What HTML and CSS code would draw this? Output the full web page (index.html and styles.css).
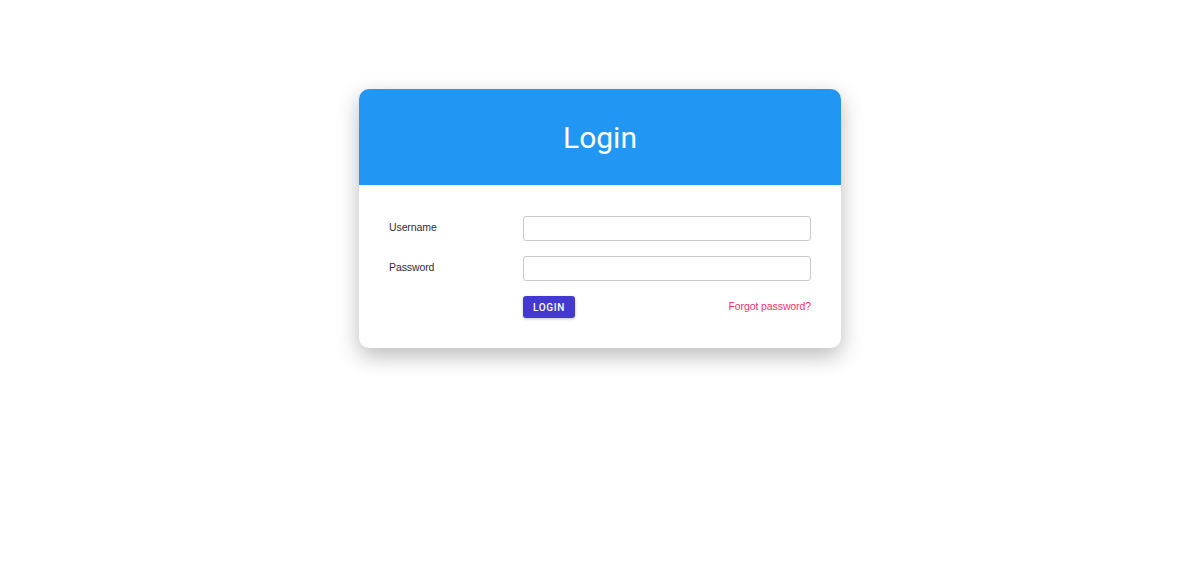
FILE: index.html
```html
<!DOCTYPE html>
<html lang="en">
<head>
    <meta charset="UTF-8">
    <meta name="viewport" content="width=device-width, initial-scale=1.0">
    <title>Login</title>
    <link rel="stylesheet" href="styles.css">
</head>
<body>
    <div class="card">
        <div class="card-header">
            <h1>Login</h1>
        </div>
        <form class="card-body">
            <label for="username">Username</label>
            <input type="text" id="username">
            <label for="password">Password</label>
            <input type="password" id="password">
            <div></div>
            <div class="actions">
                <button type="button" class="btn-login">Login</button>
                <a href="#" class="forgot">Forgot password?</a>
            </div>
        </form>
    </div>
</body>
</html>
```

FILE: styles.css
```css
body {
    font-family: "Liberation Sans", Arial, sans-serif;
    display: flex;
    justify-content: center;
    align-items: flex-start;
    min-height: 100vh;
    background-color: #fff;
    margin: 0;
    padding-top: 89px;
    box-sizing: border-box;
}

.card {
    width: 482px;
    background-color: #fff;
    border-radius: 10px;
    overflow: hidden;
    box-shadow: 0 8px 22px rgba(0, 0, 0, 0.27);
}

.card-header {
    background-color: #2196f3;
    height: 96px;
    display: flex;
    align-items: center;
    justify-content: center;
}

.card-header h1 {
    margin: 0;
    color: #fff;
    font-family: Roboto, sans-serif;
    font-weight: 400;
    font-size: 30px;
}

.card-body {
    display: grid;
    grid-template-columns: 134px 1fr;
    row-gap: 15px;
    align-items: center;
    padding: 31px 30px 30px 30px;
    margin: 0;
}

label {
    font-size: 10.5px;
    letter-spacing: -0.1px;
    color: #2e2e36;
    padding-bottom: 3px;
}

input {
    height: 25px;
    box-sizing: border-box;
    border: 1px solid #c8c8c8;
    border-radius: 3px;
    padding: 2px 6px;
    font-size: 12px;
    outline: none;
}

.actions {
    display: flex;
    justify-content: space-between;
    align-items: center;
}

.btn-login {
    width: 52px;
    height: 22px;
    padding: 0;
    border: none;
    border-radius: 3px;
    background-color: #4339d1;
    color: #fff;
    font-family: Roboto, sans-serif;
    font-weight: 500;
    font-size: 10px;
    letter-spacing: 0.7px;
    text-transform: uppercase;
    box-shadow: 0 1px 3px rgba(0, 0, 0, 0.25);
    cursor: pointer;
}

.forgot {
    font-size: 10.5px;
    letter-spacing: -0.1px;
    color: #ff2f6e;
    text-decoration: none;
    padding-bottom: 2px;
}
```
